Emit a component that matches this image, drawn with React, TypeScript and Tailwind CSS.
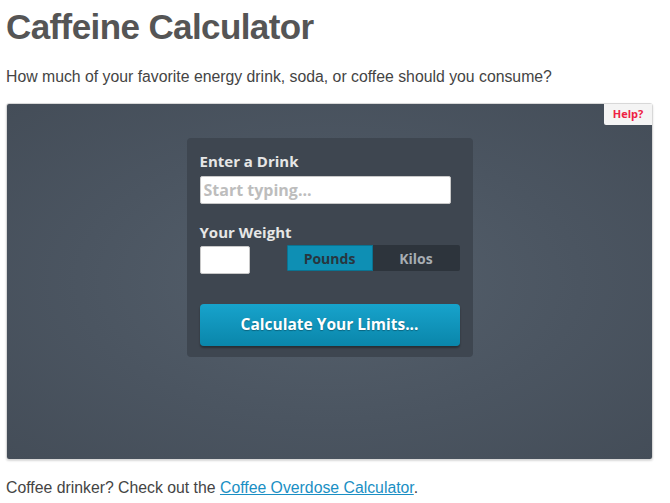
import React from "react";

export default function App() {
  return (
    <div className="w-[670px] h-[503px] bg-white overflow-hidden pl-[6px] pr-[17px]" style={{ fontFamily: '"Liberation Sans", Arial, sans-serif' }}>
      <h1 className="text-[35px] font-bold text-[#555555] leading-[40px] pt-[7px] tracking-[-0.6px]">Caffeine Calculator</h1>
      <p className="text-[15.8px] text-[#444444] leading-[20px] mt-[20px]">How much of your favorite energy drink, soda, or coffee should you consume?</p>
      <div className="relative mt-[16px] h-[357px] rounded-[3px] border border-[#d8d8d8] shadow-[0_1px_2px_rgba(0,0,0,0.15)] bg-[radial-gradient(ellipse_at_center,#55606c_0%,#4b5561_55%,#444d58_100%)] flex justify-center pt-[34px]">
        <div className="absolute top-0 right-0 w-[48px] h-[21px] bg-[#f4f4f4] rounded-bl-[2px] flex items-center justify-center text-[11px] font-bold text-[#ee2244]" style={{ fontFamily: '"Open Sans", sans-serif' }}>Help?</div>
        <div className="w-[286px] h-[219px] bg-[#3e4650] rounded-[4px] pl-[13px] pt-[13px] flex flex-col" style={{ fontFamily: '"Open Sans", sans-serif' }}>
          <div className="text-[15px] font-bold text-[#e6e6e6] leading-[20px]">Enter a Drink</div>
          <div className="mt-[5px] w-[251px] h-[28px] bg-white border border-[#c8c8c8] rounded-[2px] flex items-center pl-[3px] text-[16px] font-bold text-[#bdbdbd]">Start typing...</div>
          <div className="mt-[18px] text-[15px] font-bold text-[#e6e6e6] leading-[20px]">Your Weight</div>
          <div className="mt-[3px] flex items-start w-[260px]">
            <div className="w-[50px] h-[28px] bg-white border border-[#c8c8c8] rounded-[2px] mt-[1px]"></div>
            <div className="ml-auto flex w-[173px] h-[26px] rounded-[2px] overflow-hidden">
              <div className="w-[86px] bg-[#0e8fb4] border border-[#0a7391] flex items-center justify-center text-[14px] font-bold text-[#283640]">Pounds</div>
              <div className="flex-1 bg-[#2d343c] flex items-center justify-center text-[14px] font-bold text-[#a7adb3]">Kilos</div>
            </div>
          </div>
          <div className="mt-[30px] w-[260px] h-[42px] rounded-[4px] bg-gradient-to-b from-[#17a3cc] to-[#0a86aa] shadow-[0_2px_2px_rgba(0,0,0,0.35)] flex items-center justify-center text-[15.5px] font-bold text-white [text-shadow:0_1px_1px_rgba(0,0,0,0.3)]">Calculate Your Limits...</div>
        </div>
      </div>
      <p className="mt-[18px] text-[15.8px] text-[#444444] leading-[20px]">
        Coffee drinker? Check out the <a className="text-[#1a8fc4] underline" href="#">Coffee Overdose Calculator</a>.
      </p>
    </div>
  );
}
